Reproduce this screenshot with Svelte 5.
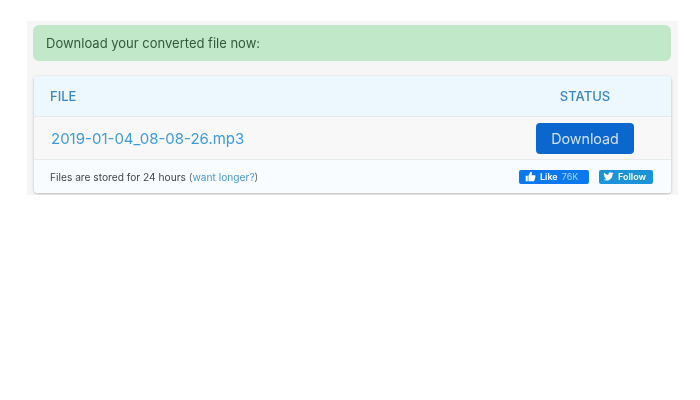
<script>
    const fileName = '2019-01-04_08-08-26.mp3';
</script>

<div class="page">
    <div class="panel">
        <div class="notice">Download your converted file now:</div>

        <div class="card">
            <div class="row head">
                <span class="file-col">FILE</span>
                <span class="status-col">STATUS</span>
            </div>
            <div class="row item">
                <a class="file-col name" href="#top">{fileName}</a>
                <div class="status-col">
                    <button class="download">Download</button>
                </div>
            </div>
            <div class="foot">
                <span class="note">Files are stored for 24 hours <span class="paren">(<a href="#top">want longer?</a>)</span></span>
                <div class="social">
                    <span class="badge like">
                        <svg viewBox="0 0 16 16" width="11" height="11"><path fill="#fff" d="M1 7h3v8H1zM5 7l3-6c1.500 0 2.200 1 2 2.300L9.600 6H14c1 0 1.600.9 1.300 1.800l-1.800 6.200c-.2.600-.7 1-1.300 1H5z"/></svg>
                        <b>Like</b> <span class="num">76K</span>
                    </span>
                    <span class="badge tw">
                        <svg viewBox="0 0 24 24" width="11" height="11"><path fill="#fff" d="M23 4.900c-.8.400-1.700.6-2.600.7.900-.6 1.600-1.400 2-2.500-.9.500-1.800.9-2.900 1.100A4.500 4.500 0 0 0 11.800 8.300C8.100 8.100 4.700 6.300 2.500 3.600c-1.200 2-.6 4.700 1.400 6-.7 0-1.400-.2-2-.6 0 2.200 1.500 4.100 3.600 4.500-.7.200-1.400.2-2 .1.600 1.800 2.300 3.100 4.200 3.100A9 9 0 0 1 1 18.600 12.800 12.800 0 0 0 20.700 7.200c.9-.6 1.700-1.400 2.300-2.300z"/></svg>
                        <b>Follow</b>
                    </span>
                </div>
            </div>
        </div>
    </div>
</div>

<style>
    :global(body) {
        margin: 0;
        background: #fff;
        font-family: "Inter", "Liberation Sans", sans-serif;
    }

    .page {
        padding: 21px 22px 0 27px;
        filter: blur(0.6px);
    }

    .panel {
        height: 174px;
        box-sizing: border-box;
        background: #f6f6f6;
        padding: 4px 7px 0 6px;
    }

    .notice {
        height: 36px;
        display: flex;
        align-items: center;
        padding-left: 13px;
        background: #c1e8c8;
        border-radius: 6px;
        color: #2f5a3c;
        font-size: 13px;
    }

    .card {
        margin: 15px 0 0 1px;
        background: #fff;
        border-radius: 4px;
        box-shadow: 0 1px 3px rgba(0, 0, 0, 0.25);
        overflow: hidden;
    }

    .row {
        display: flex;
        align-items: center;
        justify-content: space-between;
        border-bottom: 1px solid #e6eced;
        box-sizing: border-box;
    }

    .head {
        height: 41px;
        background: #ecf8fe;
        color: #3d86c6;
        font-size: 13px;
        font-weight: 500;
    }

    .item {
        height: 43px;
        background: #f8f8f8;
    }

    .file-col { margin-left: 16px; }

    .status-col {
        width: 98px;
        margin-right: 37px;
        display: flex;
        justify-content: center;
    }

    .name {
        margin-left: 17px;
        color: #3d9bdc;
        font-size: 15px;
        text-decoration: none;
    }

    .download {
        width: 98px;
        height: 31px;
        border: none;
        border-radius: 4px;
        background: #0b67cd;
        color: #cfe0f2;
        font-family: inherit;
        font-size: 14.300px;
        padding: 0;
    }

    .foot {
        height: 33px;
        display: flex;
        align-items: center;
        justify-content: space-between;
        padding: 0 18px 0 16px;
        background: #f8fcfe;
    }

    .note {
        color: #444;
        font-size: 10.200px;
    }

    .paren { color: #666; }
    .note a {
        color: #4a98d8;
        text-decoration: none;
    }

    .social {
        display: flex;
        gap: 10px;
    }

    .badge {
        height: 14px;
        box-sizing: border-box;
        padding-left: 6px;
        display: flex;
        align-items: center;
        gap: 4px;
        border-radius: 2px;
        color: #fff;
        font-size: 9px;
    }
    .badge b { font-weight: 600; }

    .like {
        width: 70px;
        background: #0b78ee;
    }
    .like .num { color: #a9d2f8; }

    .tw {
        width: 54px;
        padding-left: 4px;
        background: #1a93d8;
    }
</style>
